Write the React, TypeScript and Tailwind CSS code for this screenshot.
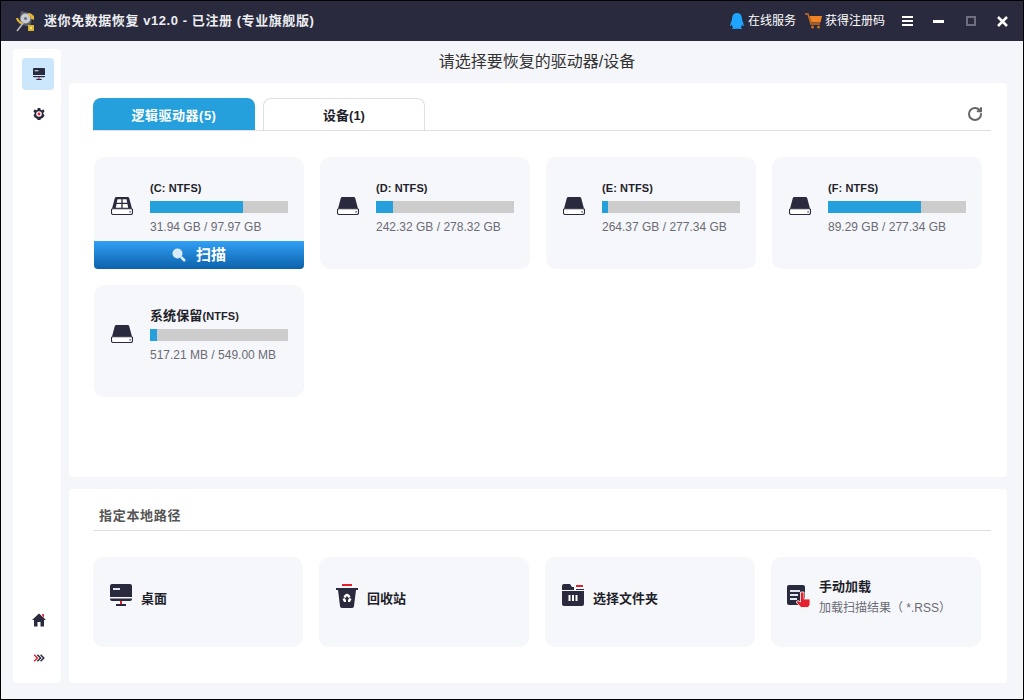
import { RotateCw } from 'lucide-react';
import { FaQq } from 'react-icons/fa';

const font = { fontFamily: '"Liberation Sans", "Noto Sans CJK SC", sans-serif' };

const drives: { prefix?: string, label: string, size: string, used: number, win?: boolean, scan?: boolean }[] = [
    { label: '(C: NTFS)', size: '31.94 GB / 97.97 GB', used: 93, win: true, scan: true },
    { label: '(D: NTFS)', size: '242.32 GB / 278.32 GB', used: 17 },
    { label: '(E: NTFS)', size: '264.37 GB / 277.34 GB', used: 6 },
    { label: '(F: NTFS)', size: '89.29 GB / 277.34 GB', used: 93 },
    { prefix: '系统保留', label: '(NTFS)', size: '517.21 MB / 549.00 MB', used: 7 },
];

function Logo() {
    return (
        <svg width="20" height="22" viewBox="0 0 20 22">
            <path d="M6 1l12 3-3 13-11-3z" fill="#5c5f66" />
            <circle cx="10.500" cy="8.500" r="5" fill="#c9ccd2" />
            <circle cx="10.500" cy="8.500" r="1.500" fill="#6d7078" />
            <path d="M1 8c1 4 4 6 7 6l-1-2c-2 0-3-2-4-4zM13 3c2 0 4 1 5 3l1-1v5l-4-2 1-1c-1-1-2-2-3-2z" fill="#e8b92e" />
            <path d="M9 12l-7 9" stroke="#b4b8be" strokeWidth="1.600" />
            <path d="M13 15h6v6h-6z" fill="#d9b432" />
            <path d="M15 17h2v2h-2z" fill="#f4e38c" />
        </svg>
    );
}

function Cart() {
    return (
        <svg width="17" height="16" viewBox="0 0 17 16">
            <path d="M0 1h3l3 10h9" fill="none" stroke="#c96f1e" strokeWidth="1.400" />
            <path d="M4.500 3H17l-1.500 6.500H6.500z" fill="#f08324" />
            <circle cx="7.500" cy="14" r="1.500" fill="#c96f1e" />
            <circle cx="13.500" cy="14" r="1.500" fill="#c96f1e" />
        </svg>
    );
}

function Monitor({ size = 22 }: { size?: number }) {
    return (
        <svg width={size} height={size} viewBox="0 0 22 22">
            <path d="M2 0h18a2 2 0 0 1 2 2v11H0V2a2 2 0 0 1 2-2z" fill="#2a2a3e" />
            <path d="M3 4h7v2H3z" fill="#dfe6f2" />
            <path d="M0 14.500h22V15a2 2 0 0 1-2 2H2a2 2 0 0 1-2-2z" fill="#2a2a3e" />
            <path d="M10 17h2v3h-2z" fill="#e5202e" />
            <path d="M6 20h10v2H6z" fill="#2a2a3e" />
        </svg>
    );
}

function Gear() {
    return (
        <svg width="12" height="12" viewBox="0 0 14 14">
            <path d="M5.500 0h3l.4 1.900 1.500.7L12 1.500l1.500 2.600-1.400 1.300v1.700l1.400 1.300L12 11l-1.600 1-1.500.9-.4 2.100h-3l-.4-2.100-1.500-.9L2 11 .5 8.400l1.400-1.300V5.400L.5 4.100 2 1.500l1.600 1.100 1.500-.7z" fill="#2a2a3e" />
            <circle cx="7" cy="7" r="3.200" fill="#fff" />
            <circle cx="7" cy="7" r="1.700" fill="#e5202e" />
        </svg>
    );
}

function Home() {
    return (
        <svg width="14" height="14" viewBox="0 0 14 14">
            <path d="M7 .5L14 7h-2v6.500H8.500V9h-3v4.500H2V7H0z" fill="#2a2a3e" />
            <path d="M9.500 1.500L12 1v4z" fill="#e5202e" />
        </svg>
    );
}

function Chevrons() {
    return (
        <svg width="12" height="8" viewBox="0 0 14 10" fill="none" strokeWidth="1.800">
            <path d="M1 1l4 4-4 4" stroke="#e5202e" />
            <path d="M5 1l4 4-4 4" stroke="#2a2a3e" />
            <path d="M9 1l4 4-4 4" stroke="#2a2a3e" />
        </svg>
    );
}

function DriveIcon({ win }: { win?: boolean }) {
    return (
        <svg width="22" height="18" viewBox="0 0 23 20" preserveAspectRatio="none">
            <path d="M4 1a2 2 0 0 1 2-1h11a2 2 0 0 1 2 1l3 12H1z" fill="#2a2a3e" />
            <path d="M2 13h19a1.500 1.500 0 0 1 1.500 1.500v3a2 2 0 0 1-2 2h-18a2 2 0 0 1-2-2v-3A1.500 1.500 0 0 1 2 13z" fill="#fff" stroke="#2a2a3e" strokeWidth="1.200" />
            <path d="M19 15.500h2v2h-2z" fill="#8d93a3" />
            {win && <path d="M6.800 2.500h4v4H6zM12.200 2.500h4l.8 4h-4.800zM5.800 7.800h5V12H5zM12.200 7.800h5l.8 4.200h-5.800z" fill="#fff" />}
        </svg>
    );
}

function Trash() {
    return (
        <svg width="22" height="24" viewBox="0 0 22 24">
            <path d="M6 0h10v2H6z" fill="#e5202e" />
            <path d="M0 4h22v2H0z" fill="#2a2a3e" />
            <path d="M2 6h18l-2 16a2 2 0 0 1-2 2H6a2 2 0 0 1-2-2z" fill="#2a2a3e" />
            <path d="M11 9.500l2.500 1.500 1 2-2 1-1.500-2-1.500 2-2-1 1-2zM6.500 15l2-1 1.500 2v2H8zM15.500 15l-2-1-1.500 2v2h2z" fill="#fff" />
        </svg>
    );
}

function Folder() {
    return (
        <svg width="22" height="22" viewBox="0 0 22 22">
            <path d="M2 0h6l2 3h2v3H0V2a2 2 0 0 1 2-2z" fill="#2a2a3e" />
            <path d="M14 1h7v2h-7z" fill="#e5202e" />
            <path d="M0 7h22v13a2 2 0 0 1-2 2H2a2 2 0 0 1-2-2z" fill="#2a2a3e" />
            <path d="M14 5h8v1h-8z" fill="#2a2a3e" />
            <path d="M10 11h2v6h-2zM6.500 11h2v6h-2zM13.500 11h2v6h-2z" fill="#fff" />
        </svg>
    );
}

function ManualLoad() {
    return (
        <svg className="-ml-[1px]" width="24" height="24" viewBox="0 0 24 24">
            <path d="M2 1h14a2 2 0 0 1 2 2v17a1 1 0 0 1-1 1H2a2 2 0 0 1-2-2V3a2 2 0 0 1 2-2z" fill="#2a2a3e" />
            <path d="M3 6h10v2H3zM3 10h8v2H3zM3 14h7v2H3z" fill="#dfe6f2" />
            <path d="M13.500 8h3.500v7h6v6l-2 2.500h-7l-5-5.500 2-1.500 2.500 1.500z" fill="#e5202e" stroke="#fff" strokeWidth=".8" />
        </svg>
    );
}

function DriveCard({ prefix, label, size, used, win, scan }: { prefix?: string, label: string, size: string, used: number, win?: boolean, scan?: boolean }) {
    return (
        <div className={scan ? 'w-[210px] h-[112px] rounded-t-[10px] rounded-b-[4px] bg-[#f6f7fa] flex flex-col overflow-hidden' : 'w-[210px] h-[112px] rounded-[10px] bg-[#f6f7fa] flex flex-col overflow-hidden'}>
            <div className="flex-1 flex pl-[17px] pt-[24px]">
                <div className="w-[39px] pt-[16px]">
                    <DriveIcon win={win} />
                </div>
                <div className="w-[138px]">
                    <div className="h-[14px] text-[11px] leading-[14px] font-bold tracking-[0.1px] text-[#1f1f2b]">
                        {prefix && <span className="text-[13px]">{prefix}</span>}
                        {label}
                    </div>
                    <div className="mt-[6px] h-[12px] bg-[#cccccc]">
                        <div className="h-full bg-[#26a0dc]" style={{ width: used }}></div>
                    </div>
                    <div className="mt-[7px] text-[12px] leading-[14px] text-[#6b6b75]">{size}</div>
                </div>
            </div>
            {scan && (
                <div className="h-[28px] flex items-center justify-center gap-[10px] bg-gradient-to-b from-[#31a0f5] to-[#0b62ab]">
                    <svg width="14" height="14" viewBox="0 0 14 14">
                        <circle cx="5.500" cy="5.500" r="5" fill="#d8ecfb" />
                        <path d="M9 9l4 4" stroke="#d8ecfb" strokeWidth="2.500" />
                    </svg>
                    <span className="text-[15px] font-bold text-white">扫描</span>
                </div>
            )}
        </div>
    );
}

function PathCard({ icon, title, sub }: { icon: React.ReactNode, title: string, sub?: string }) {
    return (
        <div className="w-[210px] h-[90px] rounded-[10px] bg-[#f6f7fa] flex items-start pl-[17px] pt-[27px]">
            <div className="w-[31px] shrink-0">{icon}</div>
            {sub ? (
                <div className="-mt-[6px]">
                    <div className="text-[13px] leading-[18px] font-bold text-[#1f1f2b]">{title}</div>
                    <div className="mt-[4px] text-[12px] leading-[16px] text-[#6b6b75] [text-spacing-trim:space-all]">{sub}</div>
                </div>
            ) : (
                <div className="text-[13px] leading-[18px] pt-[6px] font-bold text-[#1f1f2b]">{title}</div>
            )}
        </div>
    );
}

export default function App() {
    return (
        <div style={font} className="w-[1024px] h-[700px] border border-black bg-[#f5f6fa] flex flex-col overflow-hidden">
            <div className="h-[40px] shrink-0 bg-[#2a2a3e] flex items-center pl-[14px] pr-[15px] text-white">
                <Logo />
                <span className="ml-[9px] text-[13px] font-bold tracking-[0.57px] text-[#eceef2]">迷你免数据恢复 v12.0 - 已注册 (专业旗舰版)</span>
                <div className="ml-auto flex items-center">
                    <FaQq className="text-[#1fa5ff]" size={16} />
                    <span className="ml-[3px] text-[12px]">在线服务</span>
                    <div className="ml-[9px]"><Cart /></div>
                    <span className="ml-[3px] text-[12px]">获得注册码</span>
                    <div className="ml-[17px] w-[11px] flex flex-col gap-[2px]">
                        <div className="h-[2px] bg-white"></div>
                        <div className="h-[2px] bg-white"></div>
                        <div className="h-[2px] bg-white"></div>
                    </div>
                    <div className="ml-[20px] w-[11px] h-[3px] bg-white"></div>
                    <div className="ml-[22px] w-[10px] h-[10px] border-2 border-[#6e6e7c]"></div>
                    <svg className="ml-[21px]" width="11" height="11" viewBox="0 0 11 11">
                        <path d="M1 1l9 9M10 1l-9 9" stroke="#fff" strokeWidth="2.500" />
                    </svg>
                </div>
            </div>

            <div className="flex-1 flex pt-[8px] pl-[12px] gap-[8px]">
                <div className="w-[48px] h-[634px] rounded-[4px] bg-white flex flex-col items-center pl-[2px] pt-[9px] pb-[21px]">
                    <div className="w-[32px] h-[32px] rounded-[4px] bg-[#cce6fb] flex items-center justify-center pl-[2px]">
                        <Monitor size={12} />
                    </div>
                    <div className="mt-[18px] ml-[2px]"><Gear /></div>
                    <div className="mt-auto ml-[1px]"><Home /></div>
                    <div className="mt-[27px] ml-[2px]"><Chevrons /></div>
                </div>

                <div className="w-[938px] flex flex-col">
                    <div className="h-[34px] text-center text-[16px] leading-[26px] text-[#333333] pr-[2px]">请选择要恢复的驱动器/设备</div>

                    <div className="h-[394px] rounded-[4px] bg-white pt-[15px] pl-[24px] pr-[16px]">
                        <div className="flex items-end h-[33px] border-b border-[#e0e0e0]">
                            <div className="w-[162px] h-[32px] rounded-t-[8px] bg-[#26a0dc] text-white text-[13px] font-bold tracking-[0.5px] flex items-center justify-center pt-[3px]">逻辑驱动器(5)</div>
                            <div className="ml-[8px] w-[162px] h-[32px] rounded-t-[8px] border border-b-0 border-[#e0e0e0] text-[#1f1f2b] text-[13px] font-bold flex items-center justify-center pt-[3px]">设备(1)</div>
                            <RotateCw className="ml-auto mr-[8px] mb-[8px] text-[#666666]" size={16} strokeWidth={3} />
                        </div>
                        <div className="flex flex-wrap gap-[16px] pt-[26px] pl-[1px]">
                            {drives.map((d) => (
                                <DriveCard key={d.label} {...d} />
                            ))}
                        </div>
                    </div>

                    <div className="mt-[12px] h-[194px] rounded-[4px] bg-white pl-[24px] pr-[16px]">
                        <div className="h-[42px] border-b border-[#e0e0e0] pl-[6px] pt-[18px] text-[13px] leading-[17px] font-bold tracking-[0.7px] text-[#555555]">指定本地路径</div>
                        <div className="flex gap-[16px] pt-[26px]">
                            <PathCard icon={<Monitor />} title="桌面" />
                            <PathCard icon={<Trash />} title="回收站" />
                            <PathCard icon={<Folder />} title="选择文件夹" />
                            <PathCard icon={<ManualLoad />} title="手动加载" sub="加载扫描结果（ *.RSS）" />
                        </div>
                    </div>
                </div>
            </div>
        </div>
    );
}
